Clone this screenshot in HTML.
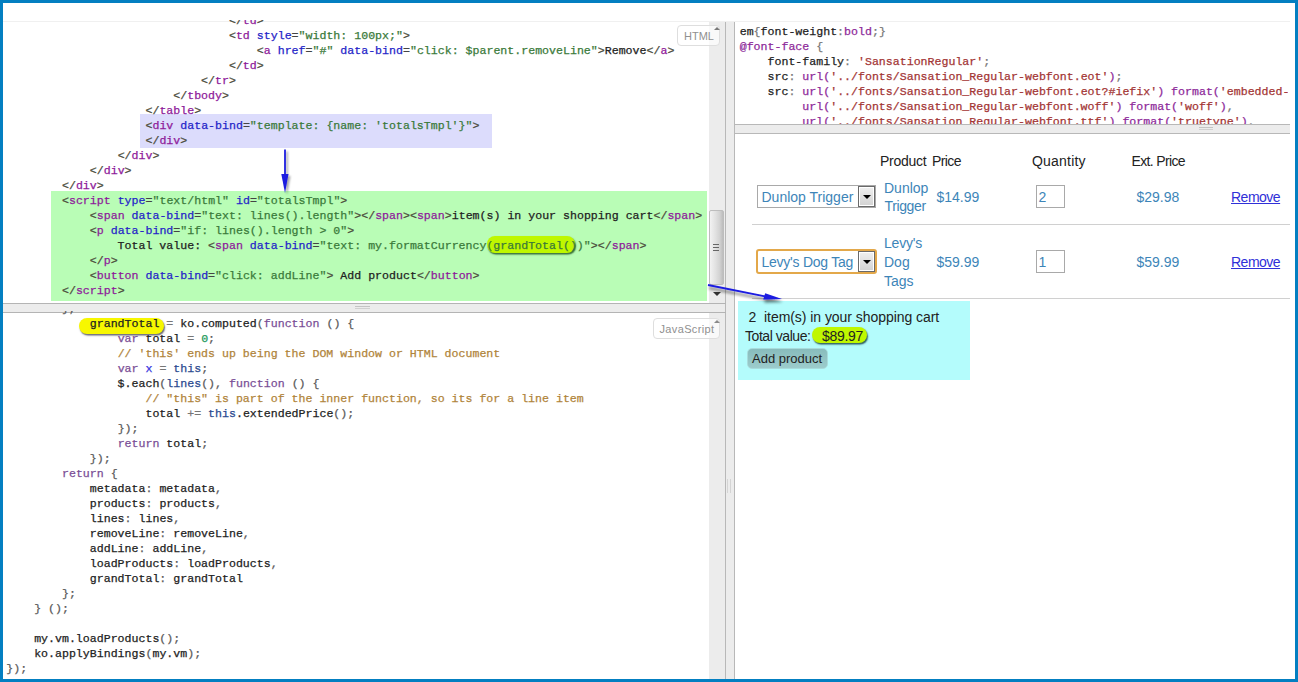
<!DOCTYPE html>
<html><head><meta charset="utf-8">
<style>
*{margin:0;padding:0;box-sizing:border-box}
html,body{width:1298px;height:682px;overflow:hidden;background:#fff}
body{position:relative;font-family:"Liberation Sans",sans-serif}
.a{position:absolute}
.frame{left:0;top:0;width:1298px;height:682px;border:3px solid #037fc1;z-index:50;pointer-events:none}
.code{font-family:"Liberation Mono",monospace;font-size:11.6px;line-height:15px;white-space:pre;color:#222;-webkit-text-stroke:0.25px currentColor}
.pane{overflow:hidden}
.t{color:#8e1a9a}     /* tag name */
.b{color:#4a4a3a}     /* bracket */
.at{color:#2424c8}    /* attribute */
.eq{color:#444}
.s{color:#3a7a3a}     /* string */
.kw{color:#7a4e96}
.cm{color:#b0843a}
.df{color:#3535e0}
.th{color:#2a4a90}
.nm{color:#229a5a}
.op{color:#777}
.pu{color:#5a5a5a}
.cs{color:#a33535}
.pp{color:#8e2a9a}
.res{font-family:"Liberation Sans",sans-serif;font-size:14px;white-space:nowrap}
.blu{color:#3d85b8}
.dd{border:1px solid #6a6a6a;background:linear-gradient(#f0f0f0,#d2d2d2);box-shadow:inset 0 0 0 1px #fff}
.dd:after{content:"";position:absolute;left:4px;top:8px;border-left:4px solid transparent;border-right:4px solid transparent;border-top:4px solid #000}
.res{line-height:19px}
.lbl{border:1px solid #dedede;border-radius:4px;background:rgba(255,255,255,.7);font-size:11px;line-height:19px;color:#909090;font-family:"Liberation Sans",sans-serif}
</style></head><body>

<!-- faint top line -->
<div class="a" style="left:3px;top:21px;width:1287px;height:1px;background:#f0f0f0"></div>

<!-- HTML pane -->
<div class="a pane" id="htmlpane" style="left:3px;top:20px;width:706px;height:283px">
<div class="a" style="left:48px;top:171px;width:656px;height:110px;background:#b9fdb6"></div>
<div class="a" style="left:137px;top:94px;width:352px;height:34px;background:#dcdcfc"></div>
<div class="a" style="left:484px;top:216px;width:88px;height:16.5px;border-radius:8px;background:#bff700;box-shadow:1px 1.5px 1.5px rgba(0,50,0,.7)"></div>
<div class="a code" style="left:3.3px;top:-7px">                                <span class="b">&lt;/</span><span class="t">td</span><span class="b">&gt;</span>
                                <span class="b">&lt;</span><span class="t">td</span> <span class="at">style</span><span class="eq">=</span><span class="s">"width: 100px;"</span><span class="b">&gt;</span>
                                    <span class="b">&lt;</span><span class="t">a</span> <span class="at">href</span><span class="eq">=</span><span class="s">"#"</span> <span class="at">data-bind</span><span class="eq">=</span><span class="s">"click: $parent.removeLine"</span><span class="b">&gt;</span>Remove<span class="b">&lt;/</span><span class="t">a</span><span class="b">&gt;</span>
                                <span class="b">&lt;/</span><span class="t">td</span><span class="b">&gt;</span>
                            <span class="b">&lt;/</span><span class="t">tr</span><span class="b">&gt;</span>
                        <span class="b">&lt;/</span><span class="t">tbody</span><span class="b">&gt;</span>
                    <span class="b">&lt;/</span><span class="t">table</span><span class="b">&gt;</span>
                    <span class="b">&lt;</span><span class="t">div</span> <span class="at">data-bind</span><span class="eq">=</span><span class="s">"template: {name: 'totalsTmpl'}"</span><span class="b">&gt;</span>
                    <span class="b">&lt;/</span><span class="t">div</span><span class="b">&gt;</span>
                <span class="b">&lt;/</span><span class="t">div</span><span class="b">&gt;</span>
            <span class="b">&lt;/</span><span class="t">div</span><span class="b">&gt;</span>
        <span class="b">&lt;/</span><span class="t">div</span><span class="b">&gt;</span>
        <span class="b">&lt;</span><span class="t">script</span> <span class="at">type</span><span class="eq">=</span><span class="s">"text/html"</span> <span class="at">id</span><span class="eq">=</span><span class="s">"totalsTmpl"</span><span class="b">&gt;</span>
            <span class="b">&lt;</span><span class="t">span</span> <span class="at">data-bind</span><span class="eq">=</span><span class="s">"text: lines().length"</span><span class="b">&gt;</span><span class="b">&lt;/</span><span class="t">span</span><span class="b">&gt;</span><span class="b">&lt;</span><span class="t">span</span><span class="b">&gt;</span>item(s) in your shopping cart<span class="b">&lt;/</span><span class="t">span</span><span class="b">&gt;</span>
            <span class="b">&lt;</span><span class="t">p</span> <span class="at">data-bind</span><span class="eq">=</span><span class="s">"if: lines().length &gt; 0"</span><span class="b">&gt;</span>
                Total value: <span class="b">&lt;</span><span class="t">span</span> <span class="at">data-bind</span><span class="eq">=</span><span class="s">"text: my.formatCurrency(grandTotal())"</span><span class="b">&gt;</span><span class="b">&lt;/</span><span class="t">span</span><span class="b">&gt;</span>
            <span class="b">&lt;/</span><span class="t">p</span><span class="b">&gt;</span>
            <span class="b">&lt;</span><span class="t">button</span> <span class="at">data-bind</span><span class="eq">=</span><span class="s">"click: addLine"</span><span class="b">&gt;</span> Add product<span class="b">&lt;/</span><span class="t">button</span><span class="b">&gt;</span>
        <span class="b">&lt;/</span><span class="t">script</span><span class="b">&gt;</span></div>
</div>
<!-- HTML scrollbar track -->
<div class="a" style="left:709px;top:22px;width:16px;height:281px;background:#ececec"></div>
<!-- right border of left panes -->
<div class="a" style="left:725px;top:22px;width:1px;height:657px;background:#b8b8b8"></div>
<!-- separator -->
<div class="a" style="left:3px;top:303px;width:723px;height:1px;background:#b4b4b4"></div>
<div class="a" style="left:3px;top:304px;width:722px;height:8px;background:#ececec"></div>
<div class="a" style="left:3px;top:312px;width:723px;height:1px;background:#b4b4b4"></div>

<!-- JS pane -->
<div class="a pane" id="jspane" style="left:3px;top:311px;width:706px;height:368px">
<div class="a" style="left:75.5px;top:6.5px;width:85.5px;height:16px;border-radius:8px;background:#f7f700;box-shadow:1px 1.5px 1.5px rgba(40,40,60,.7)"></div>
<div class="a code" style="left:3.3px;top:-10.5px">        <span class="pu">}</span><span class="pu">,</span>
            grandTotal <span class="op">=</span> ko.computed<span class="pu">(</span><span class="kw">function</span> <span class="pu">(</span><span class="pu">)</span> <span class="pu">{</span>
                <span class="kw">var</span> total <span class="op">=</span> <span class="nm">0</span><span class="pu">;</span>
                <span class="cm">// 'this' ends up being the DOM window or HTML document</span>
                <span class="kw">var</span> <span class="df">x</span> <span class="op">=</span> <span class="th">this</span><span class="pu">;</span>
                $.each<span class="pu">(</span><span class="th">lines</span><span class="pu">(</span><span class="pu">)</span><span class="pu">,</span> <span class="kw">function</span> <span class="pu">(</span><span class="pu">)</span> <span class="pu">{</span>
                    <span class="cm">// "this" is part of the inner function, so its for a line item</span>
                    total <span class="op">+</span><span class="op">=</span> <span class="th">this</span>.extendedPrice<span class="pu">(</span><span class="pu">)</span><span class="pu">;</span>
                <span class="pu">}</span><span class="pu">)</span><span class="pu">;</span>
                <span class="kw">return</span> total<span class="pu">;</span>
            <span class="pu">}</span><span class="pu">)</span><span class="pu">;</span>
        <span class="kw">return</span> <span class="pu">{</span>
            metadata<span class="pu">:</span> metadata<span class="pu">,</span>
            products<span class="pu">:</span> products<span class="pu">,</span>
            lines<span class="pu">:</span> lines<span class="pu">,</span>
            removeLine<span class="pu">:</span> removeLine<span class="pu">,</span>
            addLine<span class="pu">:</span> addLine<span class="pu">,</span>
            loadProducts<span class="pu">:</span> loadProducts<span class="pu">,</span>
            grandTotal<span class="pu">:</span> grandTotal
        <span class="pu">}</span><span class="pu">;</span>
    <span class="pu">}</span> <span class="pu">(</span><span class="pu">)</span><span class="pu">;</span>

    my.vm.loadProducts<span class="pu">(</span><span class="pu">)</span><span class="pu">;</span>
    ko.applyBindings<span class="pu">(</span>my.vm<span class="pu">)</span><span class="pu">;</span>
<span class="pu">}</span><span class="pu">)</span><span class="pu">;</span></div>
</div>
<div class="a" style="left:709px;top:313px;width:16px;height:366px;background:#ececec"></div>

<!-- vertical gutter -->
<div class="a" style="left:726px;top:22px;width:8px;height:657px;background:#ececec"></div>
<div class="a" style="left:734px;top:22px;width:1px;height:657px;background:#b8b8b8"></div>

<!-- CSS pane -->
<div class="a pane" id="csspane" style="left:735px;top:22px;width:553px;height:102px">
<div class="a code" style="left:4.7px;top:2px">em<span class="op">{</span>font-weight<span class="op">:</span><span class="pp">bold</span><span class="op">;}</span>
<span class="pp">@font-face</span> <span class="op">{</span>
    font-family<span class="op">:</span> <span class="cs">'SansationRegular'</span><span class="op">;</span>
    src<span class="op">:</span> <span class="pp">url</span><span class="pp">(</span><span class="cs">'../fonts/Sansation_Regular-webfont.eot'</span><span class="pp">)</span><span class="op">;</span>
    src<span class="op">:</span> <span class="pp">url</span><span class="pp">(</span><span class="cs">'../fonts/Sansation_Regular-webfont.eot?#iefix'</span><span class="pp">)</span> <span class="pp">format</span><span class="pp">(</span><span class="cs">'embedded-opentype'</span><span class="pp">)</span><span class="op">,</span>
         <span class="pp">url</span><span class="pp">(</span><span class="cs">'../fonts/Sansation_Regular-webfont.woff'</span><span class="pp">)</span> <span class="pp">format</span><span class="pp">(</span><span class="cs">'woff'</span><span class="pp">)</span><span class="op">,</span>
         <span class="pp">url</span><span class="pp">(</span><span class="cs">'../fonts/Sansation_Regular-webfont.ttf'</span><span class="pp">)</span> <span class="pp">format</span><span class="pp">(</span><span class="cs">'truetype'</span><span class="pp">)</span><span class="op">,</span></div>
</div>
<div class="a" style="left:735px;top:124px;width:555px;height:1px;background:#b8b8b8"></div>
<div class="a" style="left:735px;top:125px;width:555px;height:8px;background:#ececec"></div>
<div class="a" style="left:735px;top:133px;width:555px;height:1px;background:#b8b8b8"></div>

<!-- Result pane -->
<div class="a pane" id="respane" style="left:735px;top:134px;width:555px;height:545px"></div>


<!-- scrollbar HTML: thumb + arrows -->
<div class="a" style="left:709px;top:210px;width:15px;height:75px;border:1px solid #bdbdbd;border-radius:2px;background:linear-gradient(90deg,#f2f2f2,#e0e0e0 45%,#d2d2d2 75%,#bcbcbc)"></div>
<div class="a" style="left:713px;top:243.5px;width:6px;height:1.5px;background:#666;box-shadow:0 3px 0 #666,0 6px 0 #666"></div>
<div class="a" style="left:713px;top:292px;border-left:4px solid transparent;border-right:4px solid transparent;border-top:4px solid #333"></div>
<!-- grips -->
<div class="a" style="left:355px;top:306px;width:15px;height:1px;background:#c4c4c4;box-shadow:0 2px 0 #d0d0d0"></div>
<div class="a" style="left:1199px;top:127px;width:14px;height:1px;background:#c4c4c4;box-shadow:0 2px 0 #d0d0d0"></div>
<div class="a" style="left:727px;top:479px;width:1px;height:14px;background:#d4d4d4;box-shadow:3px 0 0 #d4d4d4"></div>
<!-- labels -->
<div class="a lbl" style="left:677px;top:25px;width:43px;height:21px;padding-left:6px;padding-top:0.5px">HTML</div>
<div class="a lbl" style="left:653px;top:318px;width:67px;height:21px;padding-left:5.5px;padding-top:1px;letter-spacing:0.35px">JavaScript</div>
<div class="a" style="left:713.5px;top:26.5px;border-left:3.5px solid transparent;border-right:3.5px solid transparent;border-bottom:3.5px solid #7a7a7a"></div>
<div class="a" style="left:713.5px;top:319.5px;border-left:3.5px solid transparent;border-right:3.5px solid transparent;border-bottom:3.5px solid #8a8a8a"></div>
<!-- arrows -->
<svg class="a" style="left:0;top:0;z-index:40" width="1298" height="682" viewBox="0 0 1298 682">
<defs><filter id="sh" x="-50%" y="-50%" width="200%" height="200%"><feGaussianBlur in="SourceAlpha" stdDeviation="1.6"/><feOffset dx="1" dy="3"/><feComponentTransfer><feFuncA type="linear" slope="0.55"/></feComponentTransfer><feMerge><feMergeNode/><feMergeNode in="SourceGraphic"/></feMerge></filter><filter id="sh2" x="-50%" y="-50%" width="200%" height="200%"><feGaussianBlur in="SourceAlpha" stdDeviation="1"/><feOffset dx="1.5" dy="1.5"/><feComponentTransfer><feFuncA type="linear" slope="0.35"/></feComponentTransfer><feMerge><feMergeNode/><feMergeNode in="SourceGraphic"/></feMerge></filter></defs>
<g fill="#1c1ce0" stroke="#1c1ce0">
<g filter="url(#sh2)"><rect x="284.1" y="149.5" width="1.8" height="26" stroke="none"/>
<polygon points="281.3,174 288.5,174 285,193" stroke="none"/></g>
<g filter="url(#sh)"><line x1="708" y1="285" x2="765" y2="296.3" stroke-width="1.8"/>
<polygon points="765.2,293.2 763.2,299.4 782,298.9" stroke="none"/></g>
</g>
</svg>

<!-- RESULT CONTENT -->
<div class="a res" style="left:880px;top:152px;color:#222;letter-spacing:-0.25px">Product</div>
<div class="a res" style="left:932px;top:152px;color:#222;letter-spacing:-0.6px">Price</div>
<div class="a res" style="left:1032px;top:152px;color:#222;letter-spacing:0.2px">Quantity</div>
<div class="a res" style="left:1131.5px;top:152px;color:#222;letter-spacing:-0.65px">Ext. Price</div>

<!-- row 1 -->
<div class="a" style="left:757px;top:185px;width:119px;height:23px;border:1px solid #a9a9a9;background:#fff"></div>
<div class="a res blu" style="left:761.5px;top:188px">Dunlop Trigger</div>
<div class="a dd" style="left:858px;top:186px;width:17px;height:21px"></div>
<div class="a res blu" style="left:884px;top:178.5px">Dunlop</div>
<div class="a res blu" style="left:884.5px;top:197px;letter-spacing:-0.37px">Trigger</div>
<div class="a res blu" style="left:936.5px;top:187.5px">$14.99</div>
<div class="a" style="left:1036px;top:185px;width:29px;height:23px;border:1px solid #a9a9a9"></div>
<div class="a res blu" style="left:1038.5px;top:187.5px">2</div>
<div class="a res blu" style="left:1136.5px;top:187.5px">$29.98</div>
<div class="a res" style="left:1231px;top:187.5px;color:#3030d8;text-decoration:underline;letter-spacing:-0.5px">Remove</div>
<div class="a" style="left:752px;top:224px;width:538px;height:1px;background:#d0d0d0"></div>

<!-- row 2 -->
<div class="a" style="left:756px;top:249px;width:121px;height:25px;border:2px solid #e3a84a;border-radius:3px;background:#fff"></div>
<div class="a res blu" style="left:761.5px;top:253px;letter-spacing:-0.24px">Levy's Dog Tag</div>
<div class="a dd" style="left:858px;top:251px;width:17px;height:21px"></div>
<div class="a res blu" style="left:884px;top:234px;letter-spacing:-0.2px">Levy's</div>
<div class="a res blu" style="left:884px;top:253px">Dog</div>
<div class="a res blu" style="left:884px;top:271.5px">Tags</div>
<div class="a res blu" style="left:936.5px;top:252.5px">$59.99</div>
<div class="a" style="left:1036px;top:250px;width:29px;height:23px;border:1px solid #a9a9a9"></div>
<div class="a res blu" style="left:1038.5px;top:252.5px">1</div>
<div class="a res blu" style="left:1136.5px;top:252.5px">$59.99</div>
<div class="a res" style="left:1231px;top:252.5px;color:#3030d8;text-decoration:underline;letter-spacing:-0.5px">Remove</div>
<div class="a" style="left:752px;top:298px;width:538px;height:1px;background:#d0d0d0"></div>

<!-- totals box -->
<div class="a" style="left:738px;top:301px;width:232px;height:79px;background:#b4fcfc"></div>
<div class="a res" style="left:748.5px;top:308px;color:#222">2</div>
<div class="a res" style="left:764px;top:308px;color:#222;letter-spacing:-0.05px">item(s) in your shopping cart</div>
<div class="a res" style="left:745px;top:326.5px;color:#222;letter-spacing:-0.45px">Total value:</div>
<div class="a" style="left:812px;top:327px;width:55px;height:16px;border-radius:8px;background:#bff700;box-shadow:1px 1.5px 1.5px rgba(0,40,40,.75)"></div>
<div class="a res" style="left:822px;top:326.5px;color:#222;letter-spacing:-0.3px">$89.97</div>
<div class="a" style="left:747px;top:348px;width:81px;height:21px;border-radius:5px;background:linear-gradient(#88bcbc,#9ccccc);border:1px solid #a8dcdc"></div>
<div class="a res" style="left:752px;top:348.5px;color:#222;font-size:13px">Add product</div>

<div class="a frame"></div>
</body></html>
